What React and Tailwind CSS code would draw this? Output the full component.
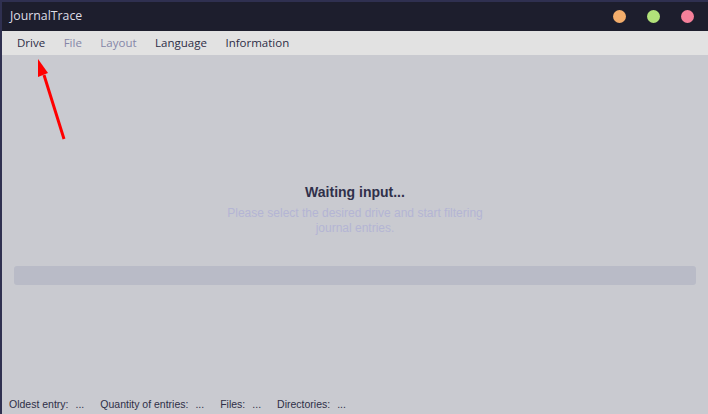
import React from 'react';

const menu = [
    { label: 'Drive', enabled: true },
    { label: 'File', enabled: false },
    { label: 'Layout', enabled: false },
    { label: 'Language', enabled: true },
    { label: 'Information', enabled: true },
];

const stats = [
    { label: 'Oldest entry:', value: '...' },
    { label: 'Quantity of entries:', value: '...' },
    { label: 'Files:', value: '...' },
    { label: 'Directories:', value: '...' },
];

export default function App() {
    return (
        <div className="w-[708px] h-[414px] overflow-hidden bg-[#2f3050] pt-[2px] pl-[2px] flex flex-col font-['Liberation_Sans',Arial,sans-serif]">
            {/* title bar */}
            <div className="h-[29px] bg-[#1d1e2d] flex items-center justify-between pl-2 pr-[14px] shrink-0">
                <span className="text-[12.3px] text-[#dedde6] font-['Open_Sans',sans-serif]">JournalTrace</span>
                <div className="flex items-center gap-[21px]">
                    <span className="w-[13px] h-[13px] rounded-full bg-[#f3ad6b]"></span>
                    <span className="w-[13px] h-[13px] rounded-full bg-[#b2e27a]"></span>
                    <span className="w-[13px] h-[13px] rounded-full bg-[#f5809a]"></span>
                </div>
            </div>

            {/* menu strip */}
            <div className="h-[24px] bg-[#e2e2e2] flex items-center pl-[15px] gap-[18.5px] shrink-0 text-[11.5px] font-['Open_Sans',sans-serif]">
                {menu.map(item => (
                    <span key={item.label} className={item.enabled ? 'text-[#2d2d46]' : 'text-[#8586a8]'}>
                        {item.label}
                    </span>
                ))}
            </div>

            {/* body */}
            <div className="relative flex-1 bg-[#c9cad0] flex flex-col">
                <div className="flex flex-col items-center pt-[128px]">
                    <span className="text-[14px] font-bold text-[#30304a] leading-[18px]">Waiting input...</span>
                    <p className="mt-[5px] w-[280px] text-center text-[12px] leading-[15px] text-[#b4b5d4]">
                        Please select the desired drive and start filtering journal entries.
                    </p>
                </div>

                <div className="mx-3 mt-[30px] h-[19px] rounded-[3px] bg-[#b9bbc7]"></div>

                <div className="mt-auto flex items-center gap-[16px] pl-[7px] pb-[1px] text-[10.5px] text-[#2e2f47]">
                    {stats.map(s => (
                        <span key={s.label} className="flex gap-[7px]">
                            <span>{s.label}</span>
                            <span>{s.value}</span>
                        </span>
                    ))}
                </div>

                {/* annotation arrow */}
                <svg className="absolute left-0 top-0" width="80" height="100" viewBox="0 0 80 100">
                    <line x1="62" y1="84" x2="42" y2="20" stroke="#ff0000" strokeWidth="3" />
                    <polygon points="36,4 46,18 36,22" fill="#ff0000" />
                </svg>
            </div>
        </div>
    );
}
